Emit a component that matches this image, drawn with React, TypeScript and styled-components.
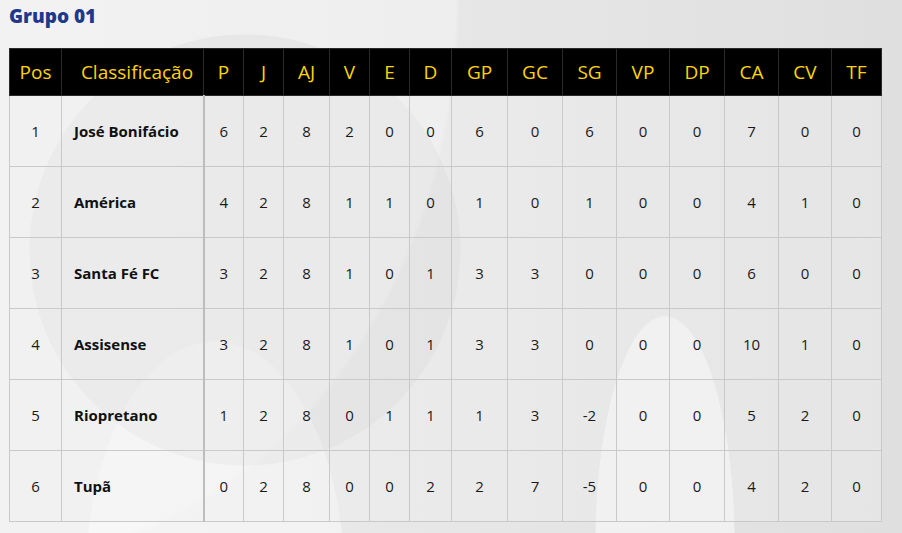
import styled, { createGlobalStyle } from "styled-components";

type Row = {
  pos: number;
  team: string;
  stats: number[];
};

const headers = ["P", "J", "AJ", "V", "E", "D", "GP", "GC", "SG", "VP", "DP", "CA", "CV", "TF"];
const widths = [52, 142, 40, 40, 46, 40, 40, 42, 56, 55, 54, 53, 55, 54, 53, 50];

const rows: Row[] = [
  { pos: 1, team: "José Bonifácio", stats: [6, 2, 8, 2, 0, 0, 6, 0, 6, 0, 0, 7, 0, 0] },
  { pos: 2, team: "América", stats: [4, 2, 8, 1, 1, 0, 1, 0, 1, 0, 0, 4, 1, 0] },
  { pos: 3, team: "Santa Fé FC", stats: [3, 2, 8, 1, 0, 1, 3, 3, 0, 0, 0, 6, 0, 0] },
  { pos: 4, team: "Assisense", stats: [3, 2, 8, 1, 0, 1, 3, 3, 0, 0, 0, 10, 1, 0] },
  { pos: 5, team: "Riopretano", stats: [1, 2, 8, 0, 1, 1, 1, 3, -2, 0, 0, 5, 2, 0] },
  { pos: 6, team: "Tupã", stats: [0, 2, 8, 0, 0, 2, 2, 7, -5, 0, 0, 4, 2, 0] },
];

const GlobalStyle = createGlobalStyle`
  html, body {
    margin: 0;
    padding: 0;
  }

  body {
    font-family: "Open Sans", "Liberation Sans", sans-serif;
    background-color: #e4e4e4;
  }
`;

const App = () => {
  return (
    <>
      <GlobalStyle />
      <Page>
        <Title>Grupo 01</Title>
        <Table>
          <colgroup>
            {widths.map((w, i) => (
              <col key={i} style={{ width: w }} />
            ))}
          </colgroup>
          <thead>
            <tr>
              <HeadCell>Pos</HeadCell>
              <HeadCell $indent>Classificação</HeadCell>
              {headers.map((h) => (
                <HeadCell key={h}>{h}</HeadCell>
              ))}
            </tr>
          </thead>
          <tbody>
            {rows.map((row) => (
              <tr key={row.pos}>
                <Cell>{row.pos}</Cell>
                <TeamCell>{row.team}</TeamCell>
                {row.stats.map((s, i) => (
                  <Cell key={i}>{s}</Cell>
                ))}
              </tr>
            ))}
          </tbody>
        </Table>
      </Page>
    </>
  );
};

const Page = styled.div`
  width: 902px;
  height: 533px;
  box-sizing: border-box;
  padding: 2px 9px 0;
  overflow: hidden;
  background:
    radial-gradient(circle at 245px 250px, rgba(0, 0, 0, 0.04) 0 215px, transparent 216px),
    radial-gradient(ellipse 130px 240px at 215px 580px, rgba(255, 255, 255, 0.45) 0 99%, transparent 100%),
    radial-gradient(ellipse 70px 230px at 665px 545px, rgba(255, 255, 255, 0.5) 0 99%, transparent 100%),
    radial-gradient(ellipse 460px 560px at 0px 0px, rgba(255, 255, 255, 0.3) 0 99%, transparent 100%),
    linear-gradient(90deg, #ededed 0%, #e6e6e6 55%, #dfdfdf 100%);
`;

const Title = styled.h2`
  margin: 0 0 18px;
  font-size: 19px;
  line-height: 28px;
  font-weight: 800;
  color: #1d3a8a;
`;

const Table = styled.table`
  width: 872px;
  table-layout: fixed;
  border-collapse: collapse;
`;

const HeadCell = styled.th<{ $indent?: boolean }>`
  height: 47px;
  padding: 0 0 0 ${(p) => (p.$indent ? "9px" : "0")};
  box-sizing: border-box;
  background-color: #000;
  border: 1px solid #2a2a2a;
  color: #ffd400;
  font-size: 19px;
  font-weight: 400;
  text-align: center;
  vertical-align: middle;
`;

const Cell = styled.td`
  height: 71px;
  padding: 0;
  box-sizing: border-box;
  background-color: rgba(240, 240, 240, 0.35);
  border: 1px solid #c9c9c9;
  color: #1a1a1a;
  font-size: 15px;
  text-align: center;
  vertical-align: middle;
`;

const TeamCell = styled(Cell)`
  padding-left: 12px;
  text-align: left;
  font-weight: 700;
  color: #111;
  border-right: 2px solid #bdbdbd;
`;

export default App;
